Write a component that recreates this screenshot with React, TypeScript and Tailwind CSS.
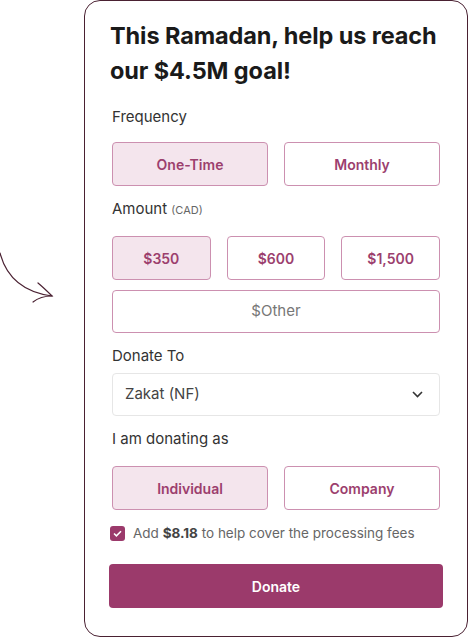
import React, { useState } from 'react';

const font = { fontFamily: 'Inter, "Noto Sans", sans-serif' };

function Choice(props: { label: string; active?: boolean; onClick?: () => void; className?: string }) {
  const { label, active, onClick, className } = props;
  return (
    <button
      type="button"
      onClick={onClick}
      className={`h-[44px] rounded-[4px] border-[1.5px] border-[#cc90b0] text-[14px] font-semibold text-[#9c3f6e] ${
        active ? 'bg-[#f4e5ed]' : 'bg-white'
      } ${className ?? ''}`}
    >
      {label}
    </button>
  );
}

function Arrow() {
  return (
    <svg width="84" height="638" viewBox="0 0 84 638" className="shrink-0">
      <path d="M0 253 C 6 276, 22 292, 52 296" fill="none" stroke="#4a2132" strokeWidth="1.2" strokeLinecap="round" />
      <path d="M38 283 C 44 288, 48 292, 52 296 C 44 296, 38 298, 33 302" fill="none" stroke="#4a2132" strokeWidth="1.2" strokeLinecap="round" />
    </svg>
  );
}

export default function App() {
  const [frequency, setFrequency] = useState('One-Time');
  const [amount, setAmount] = useState('$350');
  const [donorType, setDonorType] = useState('Individual');
  const [coverFees, setCoverFees] = useState(true);

  return (
    <div className="flex h-[638px] w-[469px] bg-white" style={font}>
      <Arrow />
      <div className="flex h-[637px] w-[384px] flex-col rounded-[16px] border border-[#4a2132] px-[27px] pt-[17px]">
        <h1 className="-ml-[2px] text-[23.5px] font-bold leading-[35px] tracking-[-0.1px] text-[#1a1a1a]">
          This Ramadan, help us reach our $4.5M goal!
        </h1>

        <div className="mt-[18px] text-[15px] leading-[22px] text-[#333]">Frequency</div>
        <div className="mt-[14px] grid grid-cols-2 gap-[16px]">
          {['One-Time', 'Monthly'].map(f => (
            <Choice key={f} label={f} active={frequency === f} onClick={() => setFrequency(f)} />
          ))}
        </div>

        <div className="mt-[12px] text-[15px] leading-[22px] text-[#333]">
          Amount <span className="text-[11px] text-[#666]">(CAD)</span>
        </div>
        <div className="mt-[15px] grid grid-cols-3 gap-[16px]">
          {['$350', '$600', '$1,500'].map(a => (
            <Choice key={a} label={a} active={amount === a} onClick={() => setAmount(a)} />
          ))}
        </div>
        <button
          type="button"
          className="mt-[10px] h-[43px] rounded-[4px] border-[1.5px] border-[#cc90b0] bg-white text-[15px] text-[#777]"
        >
          $Other
        </button>

        <div className="mt-[12px] text-[15px] leading-[22px] text-[#333]">Donate To</div>
        <div className="mt-[6px] flex h-[43px] items-center justify-between rounded-[4px] border border-[#e6e6e6] pl-[12px] pr-[16px] text-[15px] text-[#444]">
          <span>Zakat (NF)</span>
          <svg width="11" height="7" viewBox="0 0 11 7">
            <path d="M1 1 L5.5 5.5 L10 1" fill="none" stroke="#333" strokeWidth="1.6" />
          </svg>
        </div>

        <div className="mt-[12px] text-[15px] leading-[22px] text-[#333]">I am donating as</div>
        <div className="mt-[16px] grid grid-cols-2 gap-[16px]">
          {['Individual', 'Company'].map(d => (
            <Choice key={d} label={d} active={donorType === d} onClick={() => setDonorType(d)} />
          ))}
        </div>

        <label className="mt-[12px] -ml-[2px] flex h-[22px] items-center gap-[8px] text-[13.5px] text-[#666]">
          <span
            onClick={() => setCoverFees(!coverFees)}
            className={`flex h-[15px] w-[15px] items-center justify-center rounded-[3px] ${coverFees ? 'bg-[#9b3a6b]' : 'border border-[#999] bg-white'}`}
          >
            {coverFees && (
              <svg width="9" height="7" viewBox="0 0 9 7">
                <path d="M1 3.5 L3.4 5.8 L8 1.2" fill="none" stroke="white" strokeWidth="1.6" />
              </svg>
            )}
          </span>
          <span>
            Add <b className="font-bold text-[#444]">$8.18</b> to help cover the processing fees
          </span>
        </label>

        <button
          type="button"
          className="-mx-[3px] mt-[20px] h-[44px] rounded-[4px] bg-[#9b3a6b] text-[14px] font-semibold text-white"
        >
          Donate
        </button>
      </div>
    </div>
  );
}
